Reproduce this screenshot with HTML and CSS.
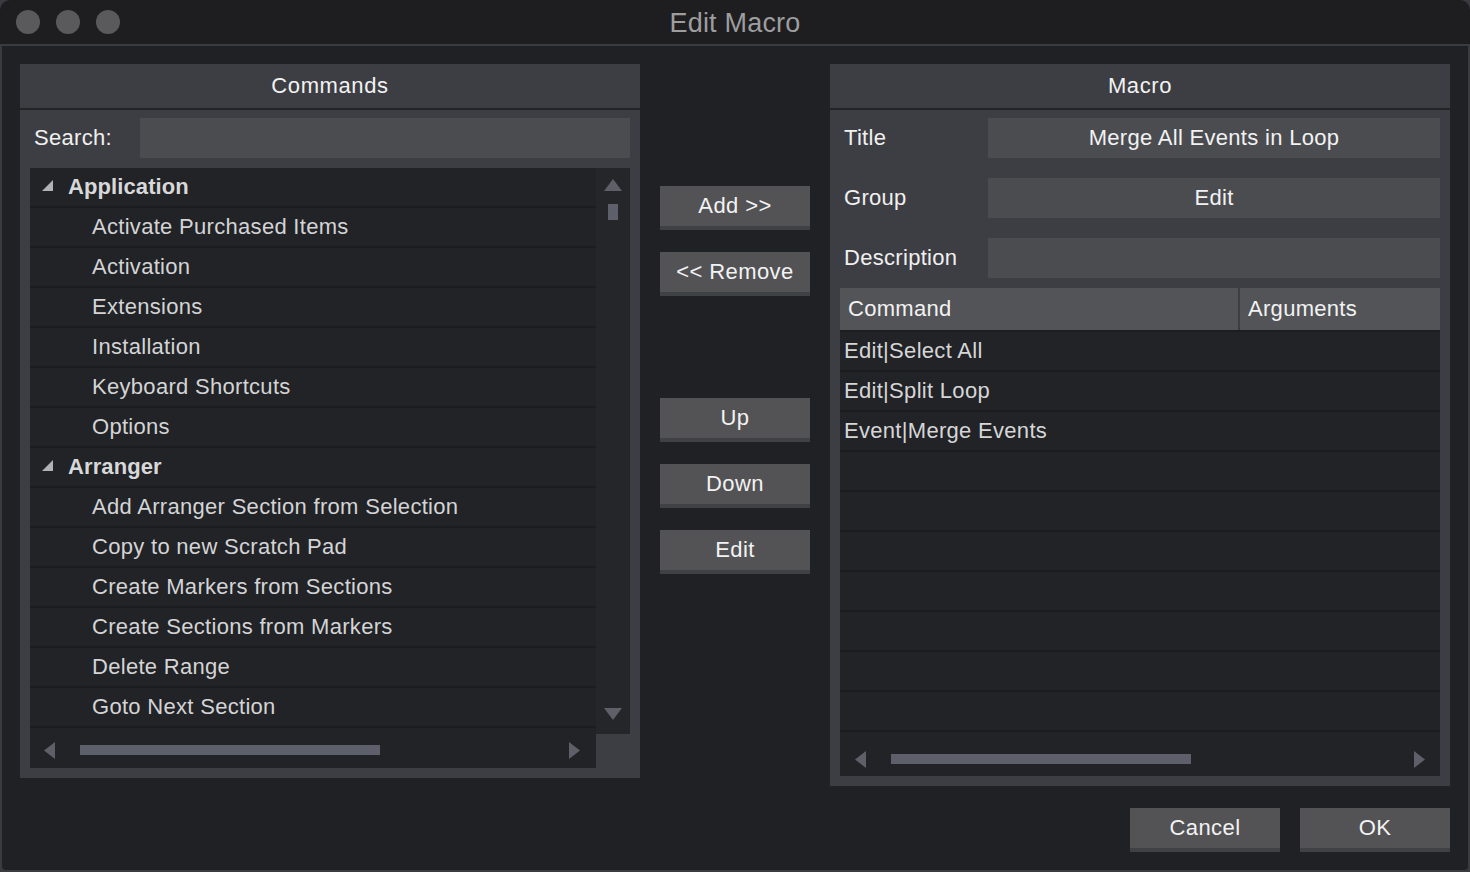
FILE: index.html
```html
<!DOCTYPE html>
<html>
<head>
<meta charset="utf-8">
<title>Edit Macro</title>
<link rel="stylesheet" href="styles.css">
</head>
<body>
<div class="window">
  <div class="titlebar">
    <div class="lights"><span class="light"></span><span class="light"></span><span class="light"></span></div>
    <div class="title">Edit Macro</div>
    <div></div>
  </div>
  <div class="content">
    <div class="main">
      <section class="panel commands">
        <div class="panel-head">Commands</div>
        <div class="panel-body">
          <div class="search-row">
            <span class="label search-label">Search:</span>
            <div class="field"></div>
          </div>
          <div class="list">
            <div class="list-main">
              <div class="rows">
                <div class="row group"><svg class="tri" width="11" height="11" viewBox="0 0 11 11"><polygon points="11,0 11,11 0,11"/></svg>Application</div>
                <div class="row item">Activate Purchased Items</div>
                <div class="row item">Activation</div>
                <div class="row item">Extensions</div>
                <div class="row item">Installation</div>
                <div class="row item">Keyboard Shortcuts</div>
                <div class="row item">Options</div>
                <div class="row group"><svg class="tri" width="11" height="11" viewBox="0 0 11 11"><polygon points="11,0 11,11 0,11"/></svg>Arranger</div>
                <div class="row item">Add Arranger Section from Selection</div>
                <div class="row item">Copy to new Scratch Pad</div>
                <div class="row item">Create Markers from Sections</div>
                <div class="row item">Create Sections from Markers</div>
                <div class="row item">Delete Range</div>
                <div class="row item">Goto Next Section</div>
              </div>
              <div class="hscroll list-hscroll">
                <svg class="arrow" width="11" height="17" viewBox="0 0 11 17"><polygon points="11,0 11,17 0,8.5"/></svg>
                <div class="thumb-h"></div>
                <svg class="arrow right" width="11" height="17" viewBox="0 0 11 17"><polygon points="0,0 11,8.5 0,17"/></svg>
              </div>
            </div>
            <div class="vscroll">
              <svg class="arrow" width="18" height="12" viewBox="0 0 18 12"><polygon points="9,0 18,12 0,12"/></svg>
              <div class="thumb-v"></div>
              <svg class="arrow down" width="18" height="12" viewBox="0 0 18 12"><polygon points="0,0 18,0 9,12"/></svg>
            </div>
          </div>
        </div>
      </section>

      <div class="middle">
        <button class="btn">Add &gt;&gt;</button>
        <button class="btn">&lt;&lt; Remove</button>
        <button class="btn spaced">Up</button>
        <button class="btn">Down</button>
        <button class="btn">Edit</button>
      </div>

      <section class="panel macro">
        <div class="panel-head">Macro</div>
        <div class="panel-body">
          <div class="form-row"><span class="label form-label">Title</span><div class="field">Merge All Events in Loop</div></div>
          <div class="form-row"><span class="label form-label">Group</span><div class="field">Edit</div></div>
          <div class="form-row"><span class="label form-label">Description</span><div class="field"></div></div>
          <div class="table">
            <div class="thead">
              <div class="th th-cmd">Command</div>
              <div class="th th-args">Arguments</div>
            </div>
            <div class="trow">Edit|Select All</div>
            <div class="trow">Edit|Split Loop</div>
            <div class="trow">Event|Merge Events</div>
            <div class="trow"></div>
            <div class="trow"></div>
            <div class="trow"></div>
            <div class="trow"></div>
            <div class="trow"></div>
            <div class="trow"></div>
            <div class="trow"></div>
            <div class="hscroll table-hscroll">
              <svg class="arrow" width="11" height="17" viewBox="0 0 11 17"><polygon points="11,0 11,17 0,8.5"/></svg>
              <div class="thumb-h"></div>
              <svg class="arrow right" width="11" height="17" viewBox="0 0 11 17"><polygon points="0,0 11,8.5 0,17"/></svg>
            </div>
          </div>
        </div>
      </section>
    </div>
    <div class="footer">
      <button class="btn">Cancel</button>
      <button class="btn">OK</button>
    </div>
  </div>
</div>
</body>
</html>
```

FILE: styles.css
```css
* { box-sizing: border-box; }

html, body {
  margin: 0;
  padding: 0;
  background: #3a3b40;
}

body {
  font-family: "Liberation Sans", Arial, sans-serif;
  letter-spacing: 0.3px;
  width: 1470px;
  height: 872px;
  overflow: hidden;
}

.window {
  width: 1470px;
  height: 872px;
  display: flex;
  flex-direction: column;
  border-radius: 10px 10px 6px 6px;
  overflow: hidden;
}

.titlebar {
  height: 46px;
  flex: none;
  background: #1e1e20;
  border-bottom: 2px solid #3a3b40;
  display: grid;
  grid-template-columns: 1fr auto 1fr;
  align-items: center;
}

.lights {
  display: flex;
  gap: 16px;
  padding-left: 16px;
}

.light {
  width: 24px;
  height: 24px;
  border-radius: 50%;
  background: #5a5a5c;
}

.title {
  color: #9d9d9f;
  font-size: 27px;
  letter-spacing: 0.2px;
  margin-top: 2px;
}

.content {
  flex: 1;
  background: #202124;
  border: 2px solid #3a3b40;
  border-top: none;
  border-radius: 0 0 6px 6px;
  padding: 18px 18px 0 18px;
  display: flex;
  flex-direction: column;
}

.main {
  display: flex;
  align-items: flex-start;
}

.panel {
  width: 620px;
  background: #3d3e43;
}

.panel-head {
  height: 46px;
  line-height: 43px;
  border-bottom: 2px solid #232427;
  text-align: center;
  color: #f2f2f2;
  font-size: 22px;
  letter-spacing: 0.6px;
}

.panel-body {
  padding: 8px 10px 10px 10px;
}

.label {
  color: #f0f0f0;
  font-size: 22px;
}

.field {
  height: 40px;
  background: #4b4c50;
  color: #f2f2f2;
  font-size: 22px;
  line-height: 39px;
  text-align: center;
}

.search-row {
  display: flex;
  align-items: center;
  height: 40px;
}

.search-label {
  width: 110px;
  padding-left: 4px;
}

.search-row .field {
  flex: 1;
}

.list {
  margin-top: 10px;
  display: flex;
  align-items: flex-start;
}

.list-main {
  width: 566px;
}

.rows {
  background: #212326;
}

.row {
  height: 40px;
  border-bottom: 2px solid #1b1c1f;
  display: flex;
  align-items: center;
  font-size: 22px;
  color: #d4d4d6;
}

.row.item {
  padding-left: 62px;
}

.row.group {
  padding-left: 12px;
  font-weight: bold;
  color: #d8d8da;
  letter-spacing: 0.1px;
}

.tri {
  fill: #b2b2b4;
  margin-right: 15px;
  margin-top: -3px;
}

.arrow {
  fill: #5e6069;
  flex: none;
}

.hscroll {
  display: flex;
  align-items: center;
  background: #222326;
}

.list-hscroll {
  height: 40px;
  padding: 4px 16px 0 14px;
}

.thumb-h {
  width: 300px;
  height: 10px;
  background: #5d606a;
  margin-left: 25px;
}

.arrow.right {
  margin-left: auto;
}

.vscroll {
  width: 34px;
  height: 566px;
  background: #252629;
  display: flex;
  flex-direction: column;
  align-items: center;
  padding: 11px 0 14px 0;
}

.thumb-v {
  width: 10px;
  height: 16px;
  background: #5d606a;
  margin-top: 13px;
}

.arrow.down {
  margin-top: auto;
}

.middle {
  width: 190px;
  display: flex;
  flex-direction: column;
  align-items: center;
  padding-top: 122px;
  gap: 22px;
}

.btn {
  width: 150px;
  height: 44px;
  border: none;
  border-bottom: 4px solid #404144;
  background: #535356;
  color: #f2f2f2;
  font-family: "Liberation Sans", Arial, sans-serif;
  font-size: 22px;
  letter-spacing: 0.4px;
  padding: 0;
  margin: 0;
}

.btn.spaced {
  margin-top: 80px;
}

.form-row {
  display: flex;
  align-items: center;
  height: 40px;
  margin-bottom: 20px;
}

.form-row:nth-child(3) {
  margin-bottom: 10px;
}

.form-label {
  width: 148px;
  padding-left: 4px;
}

.form-row .field {
  flex: 1;
}

.table {
  background: #212326;
}

.thead {
  height: 44px;
  display: flex;
  background: #535458;
  border-bottom: 2px solid #1c1d20;
}

.th {
  color: #f2f2f2;
  font-size: 22px;
  line-height: 42px;
  padding-left: 8px;
}

.th-cmd {
  width: 400px;
  border-right: 2px solid #3d3e43;
}

.th-args {
  flex: 1;
}

.trow {
  height: 40px;
  border-bottom: 2px solid #1b1c1f;
  font-size: 22px;
  color: #d6d6d8;
  line-height: 38px;
  padding-left: 4px;
}

.table-hscroll {
  height: 44px;
  padding: 10px 15px 0 15px;
}

.footer {
  margin-top: 22px;
  display: flex;
  justify-content: flex-end;
  gap: 20px;
}
```
